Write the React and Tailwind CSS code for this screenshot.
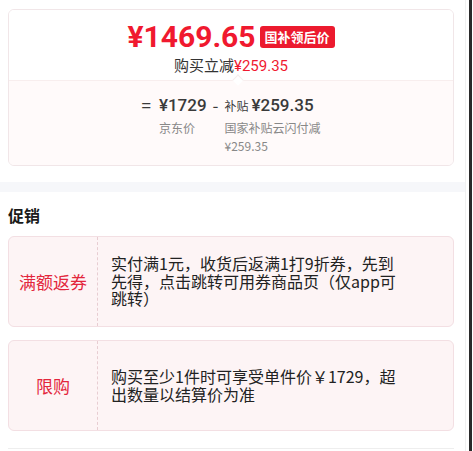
import React from "react";

const cjk = { fontFamily: '"Noto Sans CJK SC", "Noto Sans", sans-serif' };
const num = { fontFamily: 'Roboto, "Noto Sans CJK SC", sans-serif' };

function PromoCard({ label, children }) {
  return (
    <div className="flex h-[91px] rounded-md border border-[#f3dfe3] bg-[#fdf4f5]">
      <div className="w-[89px] shrink-0 flex items-center justify-center border-r border-dashed border-[#e8cdd2] text-[17px] text-[#e3263c]">
        {label}
      </div>
      <div className="flex items-center pl-[13px]">
        <p className="w-[290px] text-[16px] leading-[17.5px] text-[#222]">{children}</p>
      </div>
    </div>
  );
}

export default function App() {
  return (
    <div className="flex w-[473px] h-[451px] bg-white overflow-hidden" style={cjk}>
      <div className="w-[466px] shrink-0 border-r border-[#f0f0f0]">
        {/* PRICE CARD */}
        <div className="pt-[9px] pl-2 pr-[11px]">
          <div className="rounded-md border border-[#f1e6e8] overflow-hidden">
            <div className="relative bg-white pt-[9px] pb-1 flex flex-col items-center">
              <div className="flex items-center">
                <span className="text-[30px] leading-[36px] font-bold text-[#f0192f]" style={num}>
                  ¥1469.65
                </span>
                <span className="ml-1 h-[22px] px-[5px] flex items-center rounded-[3px] bg-[#ec1a2e] text-white text-[13px] font-bold">
                  国补领后价
                </span>
              </div>
              <div className="text-[15px] leading-[20px] text-[#333]">
                购买立减<span className="text-[#f0192f]" style={num}>¥259.35</span>
              </div>
              <div className="absolute left-[225px] -bottom-[4px] w-[8px] h-[8px] rotate-45 bg-white border-l border-t border-[#f6eded]" />
            </div>
            <div className="bg-[#fffafa] border-t border-[#f8eeee] pt-[11px] pb-[10px] flex justify-center text-[#3a3a3a]">
              <div className="flex items-start">
                <span className="text-[17px] leading-[26px] mr-[8px]">=</span>
                <div className="flex flex-col">
                  <span className="text-[17px] leading-[26px] font-medium" style={num}>¥1729</span>
                  <span className="text-[12px] leading-[18px] text-[#888] mt-[1px]">京东价</span>
                </div>
                <span className="text-[17px] leading-[26px] mx-[6px]">-</span>
                <div className="flex flex-col">
                  <div className="flex items-baseline">
                    <span className="text-[12px] mr-[3px]">补贴</span>
                    <span className="text-[17px] leading-[26px] font-medium" style={num}>¥259.35</span>
                  </div>
                  <span className="text-[12px] leading-[18px] text-[#888] mt-[1px]">国家补贴云闪付减</span>
                  <span className="text-[12px] leading-[18px] text-[#888]">¥259.35</span>
                </div>
              </div>
            </div>
          </div>
        </div>

        {/* DIVIDER BAND */}
        <div className="mt-[16px] h-[10px] bg-[#f6f7fa]" />

        {/* PROMOTIONS */}
        <div className="pl-2 pr-[11px] pt-[11px]">
          <h2 className="text-[16px] leading-[24px] font-bold text-[#1a1a1a] mb-[9px]">促销</h2>
          <PromoCard label="满额返券">
            实付满1元，收货后返满1打9折券，先到先得，点击跳转可用券商品页（仅app可跳转）
          </PromoCard>
          <div className="h-[13px]" />
          <PromoCard label="限购">
            购买至少1件时可享受单件价￥1729，超出数量以结算价为准
          </PromoCard>
          <div className="mt-[17px] border-t border-[#eeeeee]" />
        </div>
      </div>
      <div className="w-[3px] shrink-0 bg-white" />
      <div className="w-[3px] shrink-0 bg-[#2a2a2a]" />
    </div>
  );
}
